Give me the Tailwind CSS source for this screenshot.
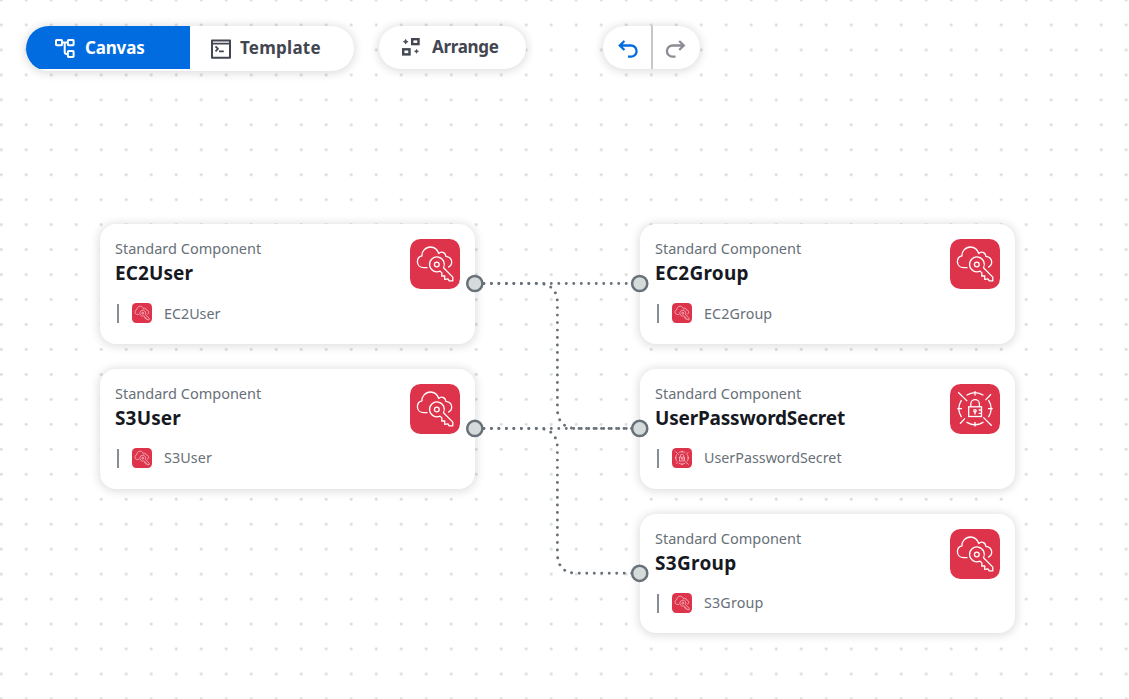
<!DOCTYPE html>
<html lang="en">
<head>
<meta charset="utf-8">
<title>Canvas</title>
<script src="https://cdn.jsdelivr.net/npm/@tailwindcss/browser@4"></script>
</head>
<body class="relative h-[699px] w-[1129px] overflow-hidden bg-white font-['Noto_Sans',sans-serif]">
<svg class="absolute" width="0" height="0">
  <defs>
    <symbol id="iam" viewBox="0 0 50 50">
      <rect width="50" height="50" rx="10.500" fill="#dd344c"/>
      <g fill="none" stroke="#fff" stroke-width="1.3" stroke-linejoin="round">
        <path d="M17.500 28.600H13.800C10.200 28.600 7.400 26.300 7.400 22.700c0-3.500 2.300-5.400 4.600-5.800C11.500 12.800 15.300 8 20.500 8c4.300 0 7 2.900 8.300 6.500 2-2.400 6.600-1.800 7 2.800 3.600.5 5.900 2.700 5.900 5.800 0 2.500-1.400 4.300-3.500 5.200"/>
        <circle cx="26.800" cy="25.500" r="2.400"/>
        <path d="M33.500 28.800a7.400 7.400 0 1 0-3.500 3.300l1.900 1.800-.2 3.100 3.100-.2-.2 3.500 3.400-.4 1.200 1.900H42.800v-3.700z"/>
      </g>
    </symbol>
    <symbol id="secret" viewBox="0 0 50 50">
      <rect width="50" height="50" rx="10.500" fill="#dd344c"/>
      <g fill="none" stroke="#fff" stroke-width="1.300">
        <path d="M16.500 11.300A16 16 0 0 1 33.500 11.300M38.500 16.200A16 16 0 0 1 38.500 33.200M33.500 38.100A16 16 0 0 1 16.500 38.100M11.500 33.200A16 16 0 0 1 11.500 16.200"/>
        <path d="M25 7v4.500M25 38v4.500M7.300 24.700H12M38 24.700h4.700M8.200 8.200l9 8.900M41 10.300l-5.500 5.800M33.300 33.400l8.500 8.400M15 34.400l-5 5.300"/>
        <rect x="18.700" y="22.800" width="12.800" height="9.700"/>
        <path d="M20.800 22.800v-2.900a4.300 4.300 0 0 1 8.600 0v2.900M25 28v2.500M28.700 26h2.800M28.700 29.300h2.800"/>
        <circle cx="25" cy="26.800" r="1.200"/>
      </g>
    </symbol>
    <pattern id="grid" x="-11.300" y="-12.400" width="25" height="24.960" patternUnits="userSpaceOnUse">
      <circle cx="12.500" cy="12.500" r="1.450" fill="#d5dbdb"/>
    </pattern>
  </defs>
</svg>
<svg class="absolute inset-0" width="1129" height="699">
  <rect width="1129" height="699" fill="url(#grid)"/>
</svg>

<header class="relative flex items-start pt-[26px] pl-[26px] text-[17px] font-bold text-[#424650]">
  <div class="flex h-[45px] w-[328px] overflow-hidden rounded-full bg-white shadow-[0_1px_8px_2px_rgba(0,7,22,0.12)]">
    <button class="flex h-[43px] w-[164px] items-center bg-[#006ce0] pl-[28px] text-white">
      <svg class="mr-[10px]" width="21" height="21" viewBox="0 0 21 21" fill="none" stroke="currentColor" stroke-width="2"><rect x="2" y="3" width="6" height="5.300" rx=".7"/><rect x="13.900" y="3" width="5.700" height="5.300" rx=".7"/><rect x="13.900" y="14" width="5.700" height="5.900" rx=".7"/><path d="M8 5.500h6M10.700 5.500V15q0 2 2 2h1.200"/></svg>
      <span class="tracking-[-0.180px]">Canvas</span>
    </button>
    <button class="flex h-[43px] flex-1 items-center pl-[21px]">
      <svg class="mr-[9px]" width="20" height="22" viewBox="0 0 20 22" fill="none" stroke="currentColor" stroke-width="2" stroke-linejoin="round"><rect x="1" y="3.500" width="18" height="17.300"/><path d="M1 6.600h18" stroke-width="1.600"/><path d="M4.500 9.300 7 11.900l-2.500 2.500M8 14.300h4.800" stroke-width="1.800"/></svg>
      <span class="tracking-[0.250px]">Template</span>
    </button>
  </div>
  <button class="ml-[25px] flex h-[43px] w-[147px] items-center rounded-full bg-white pl-[22px] shadow-[0_1px_8px_2px_rgba(0,7,22,0.12)]">
    <svg class="mr-[12px]" width="19" height="19" viewBox="0 0 19 19" fill="none" stroke="currentColor" stroke-width="2.400"><rect x="11.200" y="1.200" width="6.300" height="4.900"/><rect x="2.200" y="11.300" width="6.300" height="5.100"/><path d="M4.700 1.300 5.500 2.900 7.100 3.700 5.500 4.500 4.700 6.100 3.900 4.500 2.300 3.700 3.900 2.900zM15.500 11.300l.6 1.400 1.400.6-1.400.6-.6 1.400-.6-1.400-1.400-.6 1.400-.6z" fill="currentColor" stroke-width=".6"/></svg>
    <span class="-mt-px tracking-[-0.300px]">Arrange</span>
  </button>
  <div class="ml-[77px] flex h-[43px] w-[97px] rounded-full bg-white shadow-[0_1px_8px_2px_rgba(0,7,22,0.12)]">
    <button class="flex w-[50px] items-center border-r-2 border-[#c6c6cd] pl-[15px] text-[#006ce0]">
      <svg width="21" height="22" viewBox="0 0 21 22" fill="none" stroke="currentColor" stroke-width="2.300"><path d="M6.400 4 1.800 8.500l4.600 4.500M1.800 8.500H13a5.600 5.600 0 0 1 0 11.200H10"/></svg>
    </button>
    <button class="flex flex-1 items-center pl-[12px] text-[#8c8c94]">
      <svg width="21" height="22" viewBox="0 0 21 22" fill="none" stroke="currentColor" stroke-width="2.300"><path d="M14.200 4 18.800 8.500l-4.600 4.500M18.800 8.500H7.500a5.600 5.600 0 0 0 0 11.200H10.500"/></svg>
    </button>
  </div>
</header>

<main>
  <article class="absolute top-[224px] left-[100px] flex h-[120px] w-[375px] justify-between rounded-[16px] bg-white p-[15px] shadow-[0_1px_8px_2px_rgba(0,7,22,0.12)]">
    <div class="flex flex-col text-[#687078]">
      <p class="-mt-px mb-px text-[14.500px] leading-[20px]">Standard Component</p>
      <h2 class="text-[19px] leading-[29px] font-bold tracking-[0.080px] text-[#16191f]">EC2User</h2>
      <div class="mt-[15px] flex h-[20px] items-center pl-[2px] text-[14.300px]"><i class="mr-[13px] h-[19px] w-[2px] bg-[#868d94]"></i><svg class="mr-[12px]" width="20" height="20"><use href="#iam"/></svg><span class="pt-[2px]">EC2User</span></div>
    </div>
    <svg width="50" height="50"><use href="#iam"/></svg>
  </article>
  <article class="absolute top-[369px] left-[100px] flex h-[120px] w-[375px] justify-between rounded-[16px] bg-white p-[15px] shadow-[0_1px_8px_2px_rgba(0,7,22,0.12)]">
    <div class="flex flex-col text-[#687078]">
      <p class="-mt-px mb-px text-[14.500px] leading-[20px]">Standard Component</p>
      <h2 class="text-[19px] leading-[29px] font-bold tracking-[0.150px] text-[#16191f]">S3User</h2>
      <div class="mt-[15px] flex h-[20px] items-center pl-[2px] text-[14.300px]"><i class="mr-[13px] h-[19px] w-[2px] bg-[#868d94]"></i><svg class="mr-[12px]" width="20" height="20"><use href="#iam"/></svg><span class="tracking-[0.100px]">S3User</span></div>
    </div>
    <svg width="50" height="50"><use href="#iam"/></svg>
  </article>
  <article class="absolute top-[224px] left-[640px] flex h-[120px] w-[375px] justify-between rounded-[16px] bg-white p-[15px] shadow-[0_1px_8px_2px_rgba(0,7,22,0.12)]">
    <div class="flex flex-col text-[#687078]">
      <p class="-mt-px mb-px text-[14.500px] leading-[20px]">Standard Component</p>
      <h2 class="text-[19px] leading-[29px] font-bold tracking-[0.250px] text-[#16191f]">EC2Group</h2>
      <div class="mt-[15px] flex h-[20px] items-center pl-[2px] text-[14.300px]"><i class="mr-[13px] h-[19px] w-[2px] bg-[#868d94]"></i><svg class="mr-[12px]" width="20" height="20"><use href="#iam"/></svg><span class="pt-[2px] tracking-[0.100px]">EC2Group</span></div>
    </div>
    <svg width="50" height="50"><use href="#iam"/></svg>
  </article>
  <article class="absolute top-[369px] left-[640px] flex h-[120px] w-[375px] justify-between rounded-[16px] bg-white p-[15px] shadow-[0_1px_8px_2px_rgba(0,7,22,0.12)]">
    <div class="flex flex-col text-[#687078]">
      <p class="-mt-px mb-px text-[14.500px] leading-[20px]">Standard Component</p>
      <h2 class="text-[19px] leading-[29px] font-bold tracking-[-0.200px] text-[#16191f]">UserPasswordSecret</h2>
      <div class="mt-[15px] flex h-[20px] items-center pl-[2px] text-[14.300px]"><i class="mr-[13px] h-[19px] w-[2px] bg-[#868d94]"></i><svg class="mr-[12px]" width="20" height="20"><use href="#secret"/></svg><span>UserPasswordSecret</span></div>
    </div>
    <svg width="50" height="50"><use href="#secret"/></svg>
  </article>
  <article class="absolute top-[514px] left-[640px] flex h-[119px] w-[375px] justify-between rounded-[16px] bg-white p-[15px] shadow-[0_1px_8px_2px_rgba(0,7,22,0.12)]">
    <div class="flex flex-col text-[#687078]">
      <p class="-mt-px mb-px text-[14.500px] leading-[20px]">Standard Component</p>
      <h2 class="text-[19px] leading-[29px] font-bold tracking-[0.300px] text-[#16191f]">S3Group</h2>
      <div class="mt-[15px] flex h-[20px] items-center pl-[2px] text-[14.300px]"><i class="mr-[13px] h-[19px] w-[2px] bg-[#868d94]"></i><svg class="mr-[12px]" width="20" height="20"><use href="#iam"/></svg><span class="tracking-[0.150px]">S3Group</span></div>
    </div>
    <svg width="50" height="50"><use href="#iam"/></svg>
  </article>
</main>

<svg class="absolute inset-0" width="1129" height="699" fill="none">
  <g stroke="#687078" stroke-width="2.900" stroke-linecap="round" stroke-dasharray="0.010 7.480">
    <path d="M476.400 283.500H636"/>
    <path d="M476.400 283.500H537.400Q557.400 283.500 557.400 303.500V408.500Q557.400 428.500 577.400 428.500H636"/>
    <path d="M476.400 428.500H636"/>
    <path d="M476.400 428.500H537.400Q557.400 428.500 557.400 448.500V553.300Q557.400 573.300 577.400 573.300H636"/>
  </g>
  <g fill="#d5dbdb" stroke="#687078" stroke-width="2.500">
    <circle cx="474.800" cy="283.500" r="7.600"/><circle cx="474.800" cy="428.400" r="7.600"/>
    <circle cx="639.700" cy="283.500" r="7.600"/><circle cx="639.700" cy="428.400" r="7.600"/><circle cx="639.700" cy="573.300" r="7.600"/>
  </g>
</svg>
</body>
</html>
